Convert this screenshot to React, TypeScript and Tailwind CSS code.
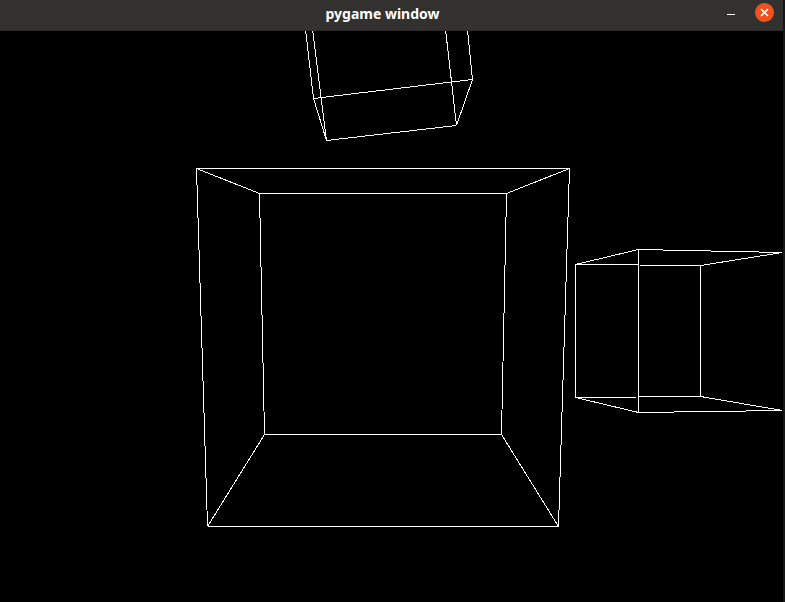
const edges: number[][] = [
  // big cube, outer face
  [196, 168, 569, 168],
  [569, 168, 558, 526],
  [558, 526, 207, 526],
  [207, 526, 196, 168],
  // big cube, inner face
  [259, 193, 506, 193],
  [506, 193, 501, 434],
  [501, 434, 264, 434],
  [264, 434, 259, 193],
  // big cube, connecting edges
  [196, 168, 259, 193],
  [569, 168, 506, 193],
  [558, 526, 501, 434],
  [207, 526, 264, 434],
  // top cube
  [304, 20, 313, 98],
  [311, 20, 326, 140],
  [444, 20, 456, 125],
  [466, 20, 472, 79],
  [313, 98, 472, 79],
  [326, 140, 456, 125],
  [313, 98, 326, 140],
  [472, 79, 456, 125],
  // right cube
  [575, 264, 700, 265],
  [575, 397, 700, 396],
  [575, 264, 575, 397],
  [700, 265, 700, 396],
  [638, 249, 638, 412],
  [575, 264, 638, 249],
  [575, 397, 638, 412],
  [700, 265, 782, 252],
  [700, 396, 782, 410],
  [638, 249, 782, 252],
  [638, 412, 782, 410],
];

export default function App() {
  return (
    <div className="w-[785px] h-[602px] flex bg-[#161616] overflow-hidden">
      <div className="w-[783px] h-full flex flex-col bg-black">
        {/* Title bar */}
        <div className="h-[31px] shrink-0 relative flex items-center justify-center pr-[18px] pb-[3px] bg-[#323130] border-b border-[#2a2928]">
          <span className="text-white text-[14px] font-bold font-['Noto_Sans',sans-serif]">pygame window</span>
          <div className="absolute left-[727px] top-[14px] w-[8px] h-px bg-white" />
          <div className="absolute left-[755px] top-[3px] w-[19px] h-[19px] rounded-full bg-[#e95420] flex items-center justify-center">
            <svg width="9" height="9" viewBox="0 0 9 9">
              <path d="M1 1L8 8M8 1L1 8" stroke="white" strokeWidth="1.6" />
            </svg>
          </div>
        </div>

        {/* pygame surface */}
        <svg className="block flex-1" viewBox="0 31 783 571" width="783" height="571">
          {edges.map(([x1, y1, x2, y2], i) => (
            <line
              key={i}
              x1={x1 + 0.5}
              y1={y1 + 0.5}
              x2={x2 + 0.5}
              y2={y2 + 0.5}
              stroke="white"
              strokeWidth="1"
              shapeRendering="crispEdges"
            />
          ))}
        </svg>
      </div>
    </div>
  );
}
